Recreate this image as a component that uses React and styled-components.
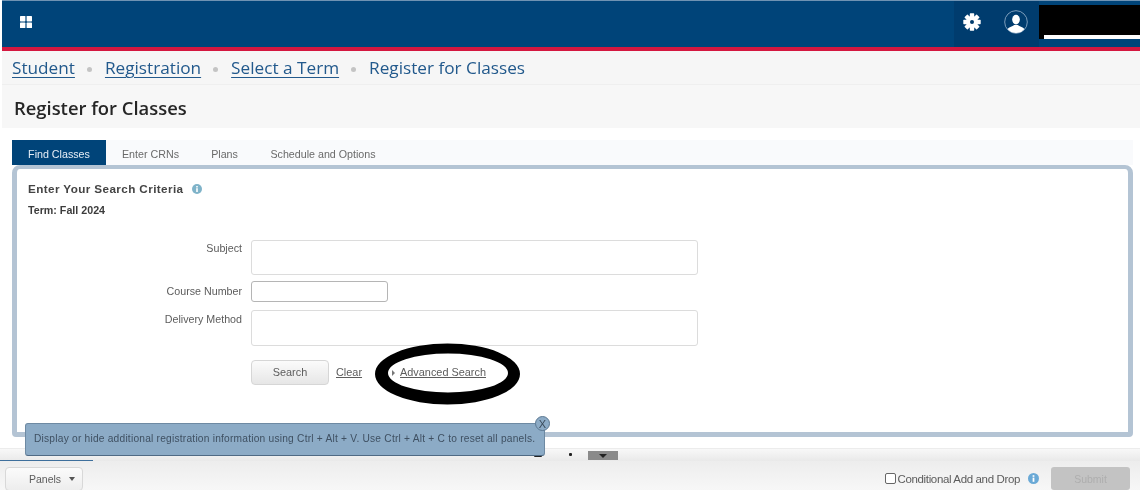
import React from "react";
import styled, { createGlobalStyle } from "styled-components";

const Global = createGlobalStyle`
  html, body { margin: 0; padding: 0; background: #fff; }
  * { box-sizing: border-box; }
  body { font-family: "Liberation Sans", Arial, sans-serif; }
`;

const Page = styled.div`
  position: relative;
  width: 1140px;
  height: 490px;
  overflow: hidden;
  display: flex;
  flex-direction: column;
  padding-left: 2px;
  background: #fff;
  filter: blur(0.45px);
`;

const TopBar = styled.header`
  height: 51px;
  flex: none;
  display: flex;
  align-items: stretch;
  justify-content: space-between;
  background: #004479;
  border-top: 1px solid #6f93b3;
  border-bottom: 4px solid #d4173f;
`;

const GridButton = styled.div`
  width: 24px;
  margin-left: 18px;
  padding-bottom: 4px;
  display: flex;
  align-items: center;
`;

const TopRight = styled.div`
  display: flex;
  align-items: flex-start;
`;

const IconZone = styled.div`
  width: 85px;
  height: 46px;
  background: #003c6e;
  display: flex;
  align-items: center;
  gap: 23px;
  padding: 0 0 4px 9px;
`;

const NameMask = styled.div`
  width: 101px;
  height: 34px;
  margin-top: 4px;
  background: #000;
  position: relative;
  &::after {
    content: "";
    position: absolute;
    left: 5px;
    right: 0;
    top: 30px;
    height: 4px;
    background: #fff;
  }
`;

const Crumbs = styled.nav`
  height: 34px;
  flex: none;
  background: #f6f6f6;
  border-bottom: 1px solid #efefef;
  padding-left: 10px;
  display: flex;
  align-items: center;
  font-family: "Open Sans", sans-serif;
  font-size: 17.2px;
  color: #22598c;
`;

const CrumbLink = styled.a`
  color: #22598c;
  text-decoration: underline;
  text-underline-offset: 3px;
  text-decoration-thickness: 1px;
`;

const Dot = styled.span`
  width: 5px;
  height: 5px;
  border-radius: 50%;
  background: #c4c4c4;
  margin: 3px 13px 0 12px;
`;

const TitleBar = styled.div`
  height: 43px;
  flex: none;
  background: #f7f7f7;
  padding: 2px 0 0 12px;
  display: flex;
  align-items: center;
  font-family: "Open Sans", sans-serif;
  font-size: 18.4px;
  font-weight: 600;
  color: #262626;
`;

const Workspace = styled.main`
  flex: 1;
  min-height: 0;
  padding: 12px 7px 0 10px;
  display: flex;
  flex-direction: column;
`;

const Tabs = styled.div`
  height: 25px;
  flex: none;
  display: flex;
  align-items: stretch;
  background: #f9fafc;
`;

const Tab = styled.div`
  display: flex;
  align-items: center;
  justify-content: center;
  padding-top: 2px;
  width: ${(p) => p.$w}px;
  font-size: 10.7px;
  color: ${(p) => (p.$active ? "#e6eef6" : "#6a6a6a")};
  background: ${(p) => (p.$active ? "#004479" : "transparent")};
`;

const Panel = styled.section`
  height: 272px;
  flex: none;
  background: #fff;
  border: 5px solid #b4c4d4;
  border-top-width: 4px;
  border-radius: 8px 8px 4px 4px;
  padding: 13px 0 0 11px;
  color: #444;
`;

const PanelHead = styled.div`
  display: flex;
  align-items: center;
  gap: 9px;
  font-size: 11.7px;
  font-weight: 700;
  letter-spacing: 0.4px;
  color: #444;
`;

const Term = styled.div`
  margin-top: 9px;
  font-size: 10.7px;
  font-weight: 700;
  color: #3c3c3c;
`;

const Form = styled.div`
  margin-top: 24px;
  display: grid;
  grid-template-columns: 214px 1fr;
  column-gap: 9px;
`;

const Label = styled.div`
  text-align: right;
  font-size: 10.7px;
  color: #5c5c5c;
  padding-top: ${(p) => p.$top}px;
`;

const Field = styled.div`
  width: ${(p) => p.$w}px;
  height: ${(p) => p.$h}px;
  margin-bottom: ${(p) => p.$mb}px;
  background: #fff;
  border: 1px solid ${(p) => p.$c || "#dcdcdc"};
  border-radius: 3px;
`;

const Actions = styled.div`
  display: flex;
  align-items: center;
  margin-top: 14px;
  font-size: 10.9px;
  color: #5c5c5c;
`;

const SearchButton = styled.div`
  width: 78px;
  height: 25px;
  display: flex;
  align-items: center;
  justify-content: center;
  padding-bottom: 1px;
  border: 1px solid #d6d6d6;
  border-radius: 4px;
  background: linear-gradient(#fbfbfb, #e6e6e6);
  color: #5c5c5c;
`;

const PlainLink = styled.a`
  color: #5c5c5c;
  text-decoration: underline;
  margin: 0 0 1px ${(p) => p.$ml}px;
`;

const Caret = styled.span`
  width: 0;
  height: 0;
  margin-left: 30px;
  border-left: 3px solid #777;
  border-top: 3px solid transparent;
  border-bottom: 3px solid transparent;
`;

const Strip = styled.div`
  position: relative;
  height: 13px;
  margin-top: 10px;
  flex: none;
  margin-left: -2px;
  background: linear-gradient(#f8f8f8, #e9e9e9);
  border-top: 1px solid #ececec;
`;

const StripThumb = styled.span`
  position: absolute;
  left: 588px;
  top: 2px;
  width: 30px;
  height: 9px;
  background: #8a8a8a;
  display: flex;
  justify-content: center;
  align-items: center;
  &::after {
    content: "";
    border-top: 4px solid #222;
    border-left: 4px solid transparent;
    border-right: 4px solid transparent;
  }
`;

const StripMark = styled.span`
  position: absolute;
  left: ${(p) => p.$x}px;
  top: ${(p) => p.$y}px;
  width: ${(p) => p.$w}px;
  height: ${(p) => p.$h}px;
  background: #222;
  border-radius: 1px;
`;

const StripActive = styled.span`
  position: absolute;
  left: 0;
  bottom: 0;
  width: 93px;
  height: 1px;
  background: #3e6f9c;
`;

const Footer = styled.footer`
  height: 29px;
  flex: none;
  margin-left: -2px;
  padding: 6px 10px 0 5px;
  background: linear-gradient(#ededed, #f7f7f7);
  display: flex;
  align-items: flex-start;
  justify-content: space-between;
  font-size: 10.5px;
  color: #5c5c5c;
`;

const PanelsButton = styled.div`
  width: 78px;
  height: 24px;
  display: flex;
  align-items: center;
  justify-content: flex-start;
  gap: 8px;
  background: linear-gradient(#fbfbfb, #ededed);
  border: 1px solid #d8d8d8;
  border-radius: 4px;
  color: #5c5c5c;
  padding-left: 23px;
  &::after {
    content: "";
    border-top: 4px solid #555;
    border-left: 3.5px solid transparent;
    border-right: 3.5px solid transparent;
  }
`;

const FooterRight = styled.div`
  display: flex;
  align-items: center;
  height: 23px;
`;

const Check = styled.span`
  width: 11px;
  height: 11px;
  background: #fff;
  border: 1px solid #666;
  border-radius: 2px;
  margin-right: 2px;
`;

const CheckText = styled.span`
  font-size: 11.5px;
  letter-spacing: -0.36px;
  color: #5c5c5c;
`;

const Submit = styled.div`
  width: 79px;
  height: 23px;
  margin-left: 12px;
  display: flex;
  align-items: center;
  justify-content: center;
  border-radius: 3px;
  background: #c3c3c3;
  color: #aeaeae;
`;

const Info = styled.span`
  display: inline-flex;
  margin-left: ${(p) => p.$ml || 0}px;
`;

const Toast = styled.div`
  position: absolute;
  left: 25px;
  top: 423px;
  width: 520px;
  height: 33px;
  display: flex;
  align-items: center;
  padding: 0 0 2px 8px;
  background: #8cabc6;
  border: 1px solid #6e8aa3;
  border-bottom-color: #4f6a84;
  border-radius: 3px;
  font-size: 10.2px;
  letter-spacing: 0.22px;
  color: #3f5062;
  white-space: nowrap;
`;

const ToastClose = styled.span`
  position: absolute;
  right: -6px;
  top: -8px;
  width: 15px;
  height: 15px;
  border-radius: 50%;
  background: #8cabc6;
  border: 1px solid #5b7892;
  display: flex;
  align-items: center;
  justify-content: center;
  font-size: 11px;
  color: #3a4a5a;
`;

const Ring = styled.svg`
  position: absolute;
  left: 375px;
  top: 343px;
`;

const InfoIcon = ({ size = 10, color = "#7fb3c9" }) => (
  <Info as="svg" width={size} height={size} viewBox="0 0 10 10">
    <circle cx="5" cy="5" r="5" fill={color} />
    <rect x="4.2" y="4.2" width="1.6" height="3.8" fill="#fff" />
    <rect x="4.2" y="2" width="1.6" height="1.5" fill="#fff" />
  </Info>
);

const Gear = () => {
  const teeth = [0, 45, 90, 135];
  return (
    <svg width="18" height="18" viewBox="0 0 18 18">
      {teeth.map((a) => (
        <rect key={a} x="6.8" y="0.3" width="4.4" height="17.4" rx="0.6" fill="#fff" transform={`rotate(${a} 9 9)`} />
      ))}
      <circle cx="9" cy="9" r="6" fill="#fff" />
      <circle cx="9" cy="9" r="2" fill="#003c6e" />
    </svg>
  );
};

const UserIcon = () => (
  <svg width="24" height="24" viewBox="0 0 25 25">
    <defs>
      <clipPath id="userclip">
        <circle cx="12.5" cy="12.5" r="11.4" />
      </clipPath>
    </defs>
    <circle cx="12.5" cy="12.5" r="11.8" fill="none" stroke="#8fabc6" strokeWidth="0.9" />
    <g clipPath="url(#userclip)" fill="#fff">
      <ellipse cx="12.5" cy="10" rx="4" ry="5" />
      <path d="M3 21c1-3 5-3.500 7.500-5.500h4c2.500 2 6.500 2.500 7.500 5.500v4H3z" />
    </g>
  </svg>
);

const GridIcon = () => (
  <svg width="12" height="12" viewBox="0 0 12 12" fill="#fff">
    <rect x="0" y="0" width="5.4" height="5.4" rx="0.6" />
    <rect x="6.6" y="0" width="5.4" height="5.4" rx="0.6" />
    <rect x="0" y="6.6" width="5.4" height="5.4" rx="0.6" />
    <rect x="6.6" y="6.6" width="5.4" height="5.4" rx="0.6" />
  </svg>
);

export default function App() {
  return (
    <>
      <Global />
      <Page>
        <TopBar>
          <GridButton>
            <GridIcon />
          </GridButton>
          <TopRight>
            <IconZone>
              <Gear />
              <UserIcon />
            </IconZone>
            <NameMask />
          </TopRight>
        </TopBar>

        <Crumbs>
          <CrumbLink>Student</CrumbLink>
          <Dot />
          <CrumbLink>Registration</CrumbLink>
          <Dot />
          <CrumbLink>Select a Term</CrumbLink>
          <Dot />
          <span>Register for Classes</span>
        </Crumbs>

        <TitleBar>Register for Classes</TitleBar>

        <Workspace>
          <Tabs>
            <Tab $active $w={94}>Find Classes</Tab>
            <Tab $w={89}>Enter CRNs</Tab>
            <Tab $w={59}>Plans</Tab>
            <Tab $w={138}>Schedule and Options</Tab>
          </Tabs>
          <Panel>
            <PanelHead>
              Enter Your Search Criteria
              <InfoIcon />
            </PanelHead>
            <Term>Term: Fall 2024</Term>
            <Form>
              <Label $top={2}>Subject</Label>
              <Field $w={447} $h={35} $mb={6} />
              <Label $top={4}>Course Number</Label>
              <Field $w={137} $h={21} $mb={8} $c="#b5b5b5" />
              <Label $top={3}>Delivery Method</Label>
              <Field $w={447} $h={36} $mb={0} />
              <span />
              <Actions>
                <SearchButton>Search</SearchButton>
                <PlainLink $ml={7}>Clear</PlainLink>
                <Caret />
                <PlainLink $ml={5}>Advanced Search</PlainLink>
              </Actions>
            </Form>
          </Panel>
        </Workspace>

        <Strip>
          <StripMark $x={534} $y={5} $w={8} $h={3} />
          <StripMark $x={569} $y={4} $w={3} $h={3} />
          <StripThumb />
          <StripActive />
        </Strip>
        <Footer>
          <PanelsButton>Panels</PanelsButton>
          <FooterRight>
            <Check />
            <CheckText>Conditional Add and Drop</CheckText>
            <Info $ml={8}><InfoIcon size={11} color="#6aa9d6" /></Info>
            <Submit>Submit</Submit>
          </FooterRight>
        </Footer>

        <Toast>
          Display or hide additional registration information using Ctrl + Alt + V. Use Ctrl + Alt + C to reset all panels.
          <ToastClose>X</ToastClose>
        </Toast>

        <Ring width="146" height="62" viewBox="0 0 146 62">
          <path
            fillRule="evenodd"
            fill="#000"
            d="M0 31a72.500 30.500 0 1 0 145 0a72.500 30.500 0 1 0 -145 0z M13 30a60 19.500 0 1 0 120 0a60 19.500 0 1 0 -120 0z"
          />
        </Ring>
      </Page>
    </>
  );
}
